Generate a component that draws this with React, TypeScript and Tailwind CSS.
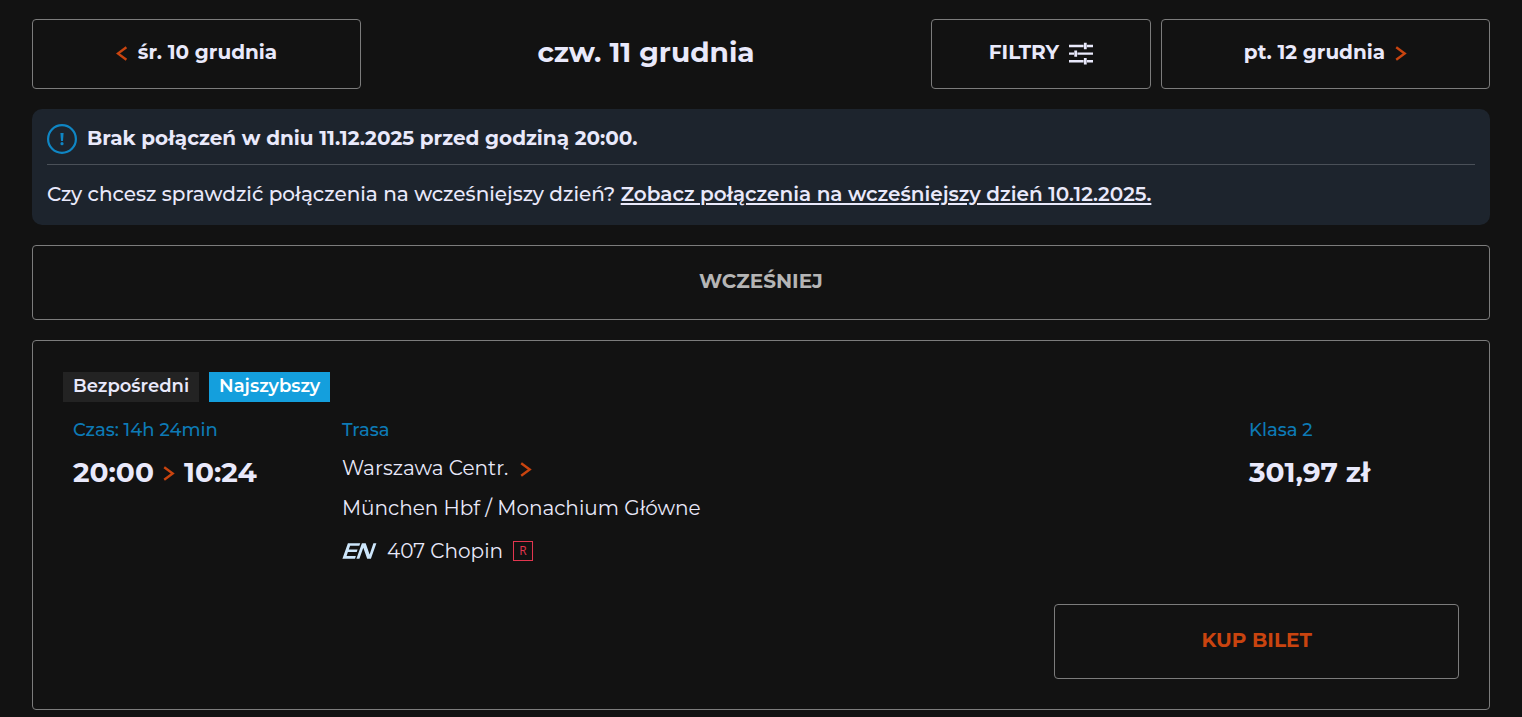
import React from "react";

const outlined = "rounded border border-[#7c7c7c]";

function Chevron({ left = false }: { left?: boolean }) {
  return (
    <svg width="12" height="18" viewBox="0 0 12 18" fill="none" stroke="#c9440f" strokeWidth="2.4" aria-hidden="true" className="shrink-0">
      {left ? <path d="M10.4 4.2 1.9 10.5l8.5 6.3" /> : <path d="M1.2 4.2l8.5 6.3-8.5 6.3" />}
    </svg>
  );
}

function FilterIcon() {
  return (
    <svg width="24" height="28" viewBox="0 0 24 28" fill="none" stroke="#e9e9fb" strokeWidth="2.4" aria-hidden="true" className="shrink-0">
      <path d="M0 8h14.6M18 8h6M0 15.6h5M8.4 15.6H24M0 23.2h14.6M18 23.2h6" />
      <path strokeWidth="2.8" d="M16.3 4.8v6.4M6.7 12.4v6.4M16.3 20v6.4" />
    </svg>
  );
}

function InfoIcon() {
  return (
    <svg width="30" height="30" viewBox="0 0 30 30" fill="none" aria-hidden="true" className="shrink-0">
      <circle cx="15" cy="15" r="13.9" stroke="#0f86c4" strokeWidth="2.2" />
      <path d="M13.4 9h3.2l-.6 8h-2z" fill="#0f86c4" />
      <circle cx="15" cy="19.7" r="1.6" fill="#0f86c4" />
    </svg>
  );
}

function EnLogo() {
  return (
    <svg width="35" height="20" viewBox="0 0 35 20" fill="#cde6fb" role="img" aria-label="EN" className="shrink-0">
      <path d="M5.9 2.2h12.4l-1 2.6H8.1L6.8 8.6h8.8l-.9 2.5H5.9l-1.3 4h9.3l-.9 2.7H.4z" />
      <path d="M19.9 2.2h3.8l3.9 11.2 3.8-11.2h3L28.9 17.8h-3.7L21.3 6.8l-3.9 11h-3z" />
    </svg>
  );
}

export default function App() {
  return (
    <main className="min-h-screen bg-[#121212] px-8 pt-[19px] pb-[7px] font-['Montserrat','Inter',sans-serif] text-xl leading-[30px] text-[#e9e9fb]">
      <nav className="grid h-[70px] grid-cols-[329fr_550fr_220fr_329fr] items-stretch gap-[10px] font-bold">
        <button className={`${outlined} flex items-center justify-center gap-[10px] pb-1`}>
          <Chevron left />
          <span>śr. 10 grudnia</span>
        </button>
        <h1 className="flex items-center justify-center pb-1 text-[28px]">czw. 11 grudnia</h1>
        <button className={`${outlined} flex items-center justify-center gap-[10px] pb-1`}>
          <span>FILTRY</span>
          <FilterIcon />
        </button>
        <button className={`${outlined} flex items-center justify-center gap-[10px] pb-1`}>
          <span>pt. 12 grudnia</span>
          <Chevron />
        </button>
      </nav>

      <section className="mt-5 rounded-[10px] bg-[#1d242d] px-[15px] pt-[15px] pb-4">
        <div className="flex items-start gap-[10px] border-b border-[#4a5058] pb-[10px] leading-7 font-bold">
          <InfoIcon />
          <p>Brak połączeń w dniu 11.12.2025 przed godziną 20:00.</p>
        </div>
        <p className="pt-[14px] font-medium">
          Czy chcesz sprawdzić połączenia na wcześniejszy dzień?{" "}
          <a href="#earlier-day" className="font-semibold underline decoration-2 underline-offset-2">
            Zobacz połączenia na wcześniejszy dzień 10.12.2025.
          </a>
        </p>
      </section>

      <button className={`${outlined} mt-5 flex h-[75px] w-full items-center justify-center pb-1 font-bold text-[#b5b5b5]`}>
        WCZEŚNIEJ
      </button>

      <article className={`${outlined} mt-5 px-[30px] pt-[31px] pb-[30px]`}>
        <div className="flex gap-[10px] text-lg leading-7 font-semibold">
          <span className="bg-[#232323] px-[10px] pb-[2px]">Bezpośredni</span>
          <span className="bg-[#149fdd] px-[10px] pb-[2px] text-white">Najszybszy</span>
        </div>

        <div className="mt-[13px] grid grid-cols-[269fr_907fr_210fr] pl-[10px]">
          <div>
            <h2 className="text-lg leading-[30px] font-medium text-[#0d7ab5]">Czas: 14h 24min</h2>
            <p className="mt-3 flex items-center gap-[9px] text-[28px] font-bold">
              <span>20:00</span>
              <Chevron />
              <span>10:24</span>
            </p>
          </div>
          <div>
            <h2 className="text-lg leading-[30px] font-medium text-[#0d7ab5]">Trasa</h2>
            <p className="mt-2 flex items-center gap-3">
              Warszawa Centr. <Chevron />
            </p>
            <p className="mt-[10px]">München Hbf / Monachium Główne</p>
            <p className="mt-[13px] flex items-center gap-[10px]">
              <EnLogo />
              <span>407 Chopin</span>
              <span className="flex h-5 w-5 items-center justify-center border border-[#e2364f] font-['Open_Sans',sans-serif] text-xs leading-none text-[#e2364f]">R</span>
            </p>
          </div>
          <div>
            <h2 className="text-lg leading-[30px] font-medium text-[#0d7ab5]">Klasa 2</h2>
            <p className="mt-3 text-[28px] font-bold">301,97 zł</p>
          </div>
        </div>

        <div className="mt-[38px] flex justify-end">
          <button className={`${outlined} h-[75px] w-[29%] pb-1 font-bold text-[#c9440f]`}>KUP BILET</button>
        </div>
      </article>
    </main>
  );
}
